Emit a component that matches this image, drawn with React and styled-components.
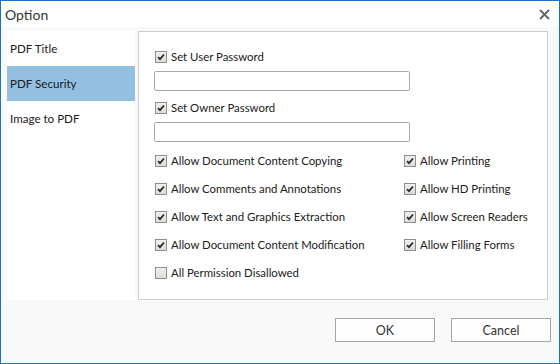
import React, { useState } from "react";
import styled, { createGlobalStyle } from "styled-components";

const Global = createGlobalStyle`
  html, body { margin: 0; padding: 0; background: #ffffff; }
  body { font-family: "Lato", "Noto Sans", sans-serif; }
  * { box-sizing: border-box; }
`;

const Window = styled.div`
  width: 560px;
  height: 364px;
  border: 1px solid #1a72c5;
  background: #f9f9f9;
  display: flex;
  flex-direction: column;
  color: #202020;
  font-size: 11.4px;
`;

const TitleBar = styled.div`
  height: 26px;
  background: #ffffff;
  display: flex;
  align-items: center;
  justify-content: space-between;
  padding: 0 9px 0 4px;
`;

const Title = styled.span`
  font-size: 14px;
  color: #333;
`;

const CloseButton = styled.button`
  border: 0;
  background: transparent;
  padding: 0;
  width: 12px;
  height: 12px;
  display: flex;
  align-items: center;
  justify-content: center;
  cursor: pointer;
`;

const Body = styled.div`
  display: flex;
  gap: 3px;
  padding: 4px 11px 0 6px;
  height: 273px;
`;

const Nav = styled.div`
  width: 128px;
  background: #ffffff;
  display: flex;
  flex-direction: column;
`;

const NavItem = styled.div`
  height: 35px;
  display: flex;
  align-items: center;
  padding-left: 3px;
  font-size: 11.6px;
  background: ${(p) => (p.$active ? "#93bfe1" : "transparent")};
`;

const Panel = styled.div`
  flex: 1;
  background: #ffffff;
  border: 1px solid #cdcdcd;
  padding: 16px 0 0 15px;
  display: flex;
  flex-direction: column;
`;

const Row = styled.label`
  display: flex;
  align-items: center;
  gap: 4px;
  height: 17px;
  padding-left: ${(p) => p.$indent || 0}px;
  white-space: nowrap;
`;

const Box = styled.span`
  width: 12px;
  height: 12px;
  border: 1px solid #8e8e8e;
  background: linear-gradient(#f0f0f0, #dcdcdc);
  display: flex;
  align-items: center;
  justify-content: center;
  flex: none;
`;

const TextInput = styled.input`
  width: 256px;
  height: 20px;
  border: 1px solid #a9a9a9;
  border-radius: 2px;
  margin: 6px 0 8px 0;
  background: #fff;
  outline: none;
`;

const Perms = styled.div`
  display: grid;
  grid-template-columns: 249px auto;
  grid-auto-rows: 28px;
  margin-top: 2px;
  padding-left: 1px;
`;

const Footer = styled.div`
  flex: 1;
  display: flex;
  justify-content: flex-end;
  align-items: flex-start;
  gap: 16px;
  padding: 18px 8px 0 0;
`;

const Button = styled.button`
  width: 100px;
  height: 24px;
  border: 1px solid #a5a5a5;
  background: #fefefe;
  font-family: inherit;
  font-size: 12.5px;
  color: #333;
  cursor: pointer;
`;

const Check = () => (
  <svg width="8" height="8" viewBox="0 0 8 8">
    <path d="M1 4.2 L3 6.2 L7 1.5" fill="none" stroke="#2a2a2a" strokeWidth="1.8" />
  </svg>
);

function CheckRow({ label, checked, indent }) {
  return (
    <Row $indent={indent}>
      <Box>{checked && <Check />}</Box>
      <span>{label}</span>
    </Row>
  );
}

export default function App() {
  const [active] = useState(1);
  const nav = ["PDF Title", "PDF Security", "Image to PDF"];
  const left = [
    "Allow Document Content Copying",
    "Allow Comments and Annotations",
    "Allow Text and Graphics Extraction",
    "Allow Document Content Modification",
  ];
  const right = [
    "Allow Printing",
    "Allow HD Printing",
    "Allow Screen Readers",
    "Allow Filling Forms",
  ];
  return (
    <>
      <Global />
      <Window>
        <TitleBar>
          <Title>Option</Title>
          <CloseButton aria-label="Close">
            <svg width="11" height="11" viewBox="0 0 11 11">
              <path d="M1 1 L10 10 M10 1 L1 10" stroke="#666" strokeWidth="2" />
            </svg>
          </CloseButton>
        </TitleBar>
        <Body>
          <Nav>
            {nav.map((n, i) => (
              <NavItem key={n} $active={i === active}>
                {n}
              </NavItem>
            ))}
          </Nav>
          <Panel>
            <CheckRow label="Set User Password" checked indent={1} />
            <TextInput type="password" />
            <CheckRow label="Set Owner Password" checked indent={1} />
            <TextInput type="password" />
            <Perms>
              {left.map((l, i) => (
                <React.Fragment key={l}>
                  <CheckRow label={l} checked />
                  <CheckRow label={right[i]} checked />
                </React.Fragment>
              ))}
              <CheckRow label="All Permission Disallowed" />
            </Perms>
          </Panel>
        </Body>
        <Footer>
          <Button>OK</Button>
          <Button>Cancel</Button>
        </Footer>
      </Window>
    </>
  );
}
